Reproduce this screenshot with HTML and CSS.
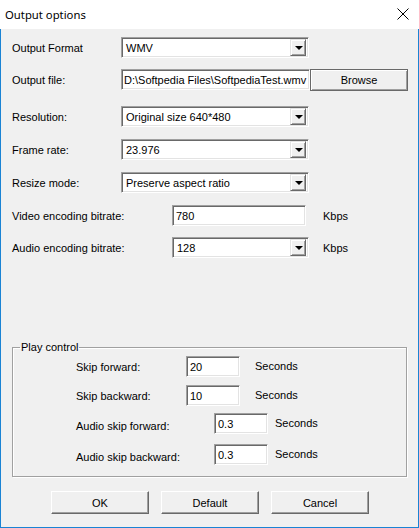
FILE: index.html
```html
<!DOCTYPE html>
<html>
<head>
<meta charset="utf-8">
<link rel="stylesheet" href="styles.css">
</head>
<body>
<div class="window">
  <div class="titlebar">
    <span class="title">Output options</span>
    <svg class="close" width="12" height="12" viewBox="0 0 12 12"><path d="M0.5 0.5 L11.5 11.5 M11.5 0.5 L0.5 11.5" stroke="#000" stroke-width="1" fill="none"/></svg>
  </div>
  <div class="client">
    <div class="row r1">
      <span class="lbl w109">Output Format</span>
      <div class="combo c188"><span class="val">WMV</span><span class="drop"><i class="arrow"></i></span></div>
    </div>
    <div class="row r2">
      <span class="lbl w109">Output file:</span>
      <div class="field f189">D:\Softpedia Files\SoftpediaTest.wmv</div>
      <div class="btn browse">Browse</div>
    </div>
    <div class="row r3">
      <span class="lbl w109">Resolution:</span>
      <div class="combo c188"><span class="val">Original size 640*480</span><span class="drop"><i class="arrow"></i></span></div>
    </div>
    <div class="row r4">
      <span class="lbl w109">Frame rate:</span>
      <div class="combo c188"><span class="val">23.976</span><span class="drop"><i class="arrow"></i></span></div>
    </div>
    <div class="row r4">
      <span class="lbl w109">Resize mode:</span>
      <div class="combo c188"><span class="val">Preserve aspect ratio</span><span class="drop"><i class="arrow"></i></span></div>
    </div>
    <div class="row r4">
      <span class="lbl w160">Video encoding bitrate:</span>
      <div class="field f134">780</div>
      <span class="unit u17">Kbps</span>
    </div>
    <div class="row r2">
      <span class="lbl w160">Audio encoding bitrate:</span>
      <div class="combo c137"><span class="val">128</span><span class="drop"><i class="arrow"></i></span></div>
      <span class="unit u14">Kbps</span>
    </div>

    <fieldset class="group">
      <legend>Play control</legend>
      <div class="gbody">
        <div class="grow g1">
          <span class="lbl w110">Skip forward:</span>
          <div class="field f54">20</div>
          <span class="unit u15 up">Seconds</span>
        </div>
        <div class="grow g2">
          <span class="lbl w110">Skip backward:</span>
          <div class="field f54">10</div>
          <span class="unit u15 up">Seconds</span>
        </div>
        <div class="grow g3">
          <span class="lbl w138 down">Audio skip forward:</span>
          <div class="field f54">0.3</div>
          <span class="unit u7 up">Seconds</span>
        </div>
        <div class="grow g4">
          <span class="lbl w138 down">Audio skip backward:</span>
          <div class="field f54">0.3</div>
          <span class="unit u7 up">Seconds</span>
        </div>
      </div>
    </fieldset>

    <div class="buttons">
      <div class="btn push">OK</div>
      <div class="btn push">Default</div>
      <div class="btn push">Cancel</div>
    </div>
  </div>
</div>
</body>
</html>
```
FILE: styles.css
```css
* { box-sizing: border-box; }
html, body { margin: 0; padding: 0; }
body {
  width: 419px;
  height: 528px;
  overflow: hidden;
  background: #f0f0f0;
  font-family: "Liberation Sans", Arial, sans-serif;
  font-size: 11px;
  color: #000;
}
.window {
  width: 419px;
  height: 528px;
  display: flex;
  flex-direction: column;
}
.titlebar {
  height: 29px;
  background: #fff;
  display: flex;
  align-items: center;
  justify-content: space-between;
  padding: 0 10px 0 5px;
}
.title {
  font-family: "Noto Sans", "Open Sans", sans-serif;
  font-size: 11.3px;
  color: #000;
  margin-top: -1px;
}
.close { display: block; margin-top: -1px; }
.client {
  flex: 1;
  background: #f0f0f0;
  border-left: 1px solid #1a83d4;
  border-right: 1px solid #1a83d4;
  border-bottom: 1px solid #1a83d4;
}
.row {
  display: flex;
  align-items: center;
  height: 21px;
  padding-left: 11px;
}
.r1 { margin-top: 8px; }
.r2 { margin-top: 11px; }
.r3 { margin-top: 16px; }
.r4 { margin-top: 12px; }
.lbl { flex: none; white-space: nowrap; }
.w109 { width: 109px; }
.w160 { width: 160px; }
.w110 { width: 110px; }
.w138 { width: 138px; }
.down { position: relative; top: 2px; }
.up { position: relative; top: -1px; }

.field, .combo {
  flex: none;
  height: 21px;
  background: #fff;
  border: 1px solid;
  border-color: #a0a0a0 #fff #fff #a0a0a0;
  box-shadow: inset 1px 1px 0 #696969, inset -1px -1px 0 #e3e3e3;
  display: flex;
  align-items: center;
  padding-left: 3px;
  white-space: nowrap;
  overflow: hidden;
}
.combo { padding-left: 4px; padding-right: 2px; }
.combo .val { flex: 1; }
.f189 { width: 189px; padding-left: 2px; }
.f134 { width: 134px; }
.f54 { width: 54px; }
.c188 { width: 188px; }
.c137 { width: 137px; }

.drop {
  flex: none;
  width: 16px;
  height: 17px;
  background: #f0f0f0;
  border: 1px solid;
  border-color: #e3e3e3 #696969 #696969 #e3e3e3;
  box-shadow: inset 1px 1px 0 #fff, inset -1px -1px 0 #a0a0a0;
  display: flex;
  align-items: center;
  justify-content: center;
}
.arrow {
  width: 0;
  height: 0;
  border-left: 4px solid transparent;
  border-right: 4px solid transparent;
  border-top: 4px solid #000;
  margin-left: 1px;
}
.unit { flex: none; }
.u17 { margin-left: 17px; }
.u14 { margin-left: 14px; }
.u15 { margin-left: 15px; }
.u7 { margin-left: 7px; }

.btn {
  flex: none;
  display: flex;
  align-items: center;
  justify-content: center;
  background: #f0f0f0;
}
.browse {
  width: 98px;
  height: 22px;
  border: 1px solid #696969;
  box-shadow: inset 1px 1px 0 #fff, inset -1px -1px 0 #a0a0a0;
}
.push {
  width: 98px;
  height: 23px;
  border: 1px solid;
  border-color: #fff #696969 #696969 #fff;
  box-shadow: inset -1px -1px 0 #a0a0a0;
}
.buttons {
  display: flex;
  gap: 12px;
  padding-left: 50px;
  margin-top: 14px;
}

.group {
  margin: 83px 0 0 11px;
  width: 395px;
  height: 136px;
  padding: 0;
  border: 1px solid #a0a0a0;
  box-shadow: 1px 1px 0 #fff, inset 1px 1px 0 #fff;
  display: block;
}
.group legend {
  padding: 0 1px;
  margin-left: 7px;
  line-height: 13px;
}
.gbody { padding-left: 63px; }
.grow {
  display: flex;
  align-items: center;
  height: 21px;
}
.g1 { margin-top: 2px; }
.g2 { margin-top: 8px; }
.g3 { margin-top: 7px; }
.g4 { margin-top: 10px; }
```
